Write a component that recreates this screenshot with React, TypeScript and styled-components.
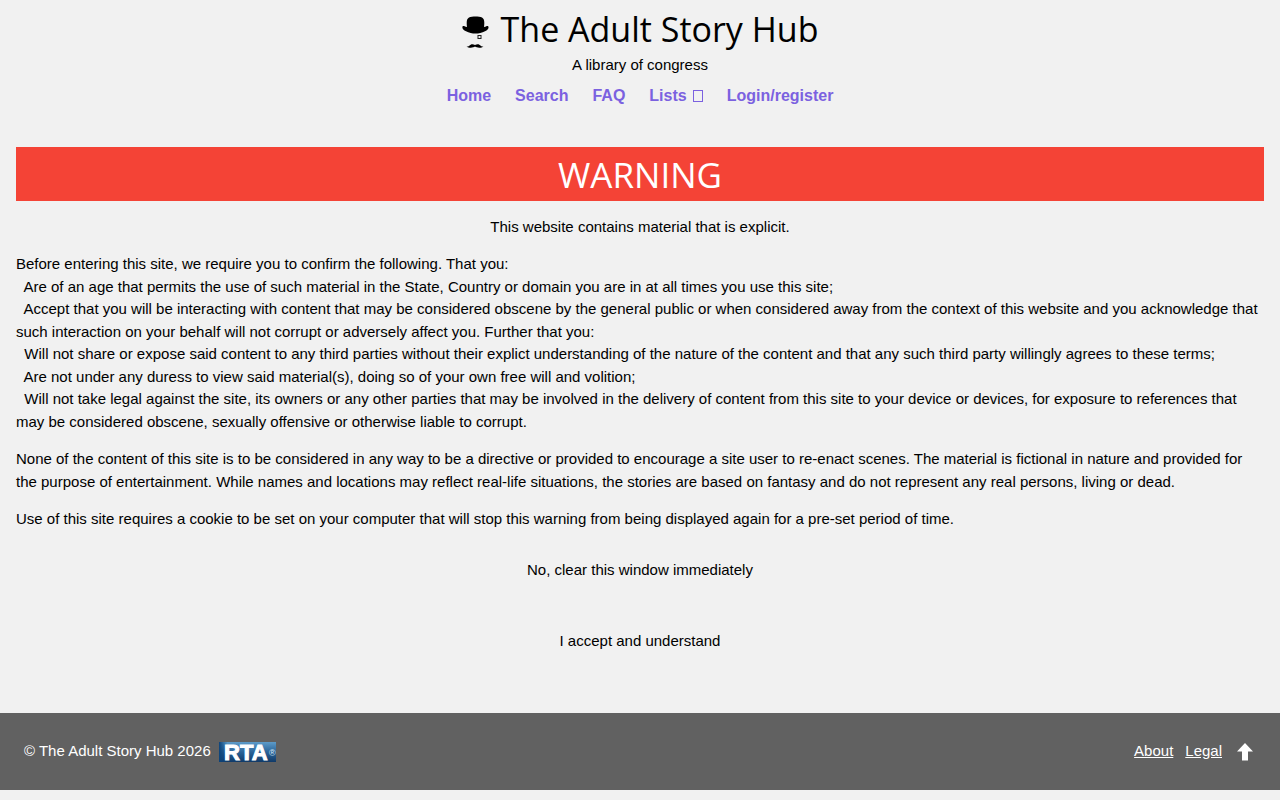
import React from "react";
import styled, { createGlobalStyle } from "styled-components";

const GlobalStyle = createGlobalStyle`
  *, *::before, *::after { box-sizing: border-box; }
  body {
    margin: 0;
    background: #f1f1f1;
    color: #000;
    font-family: "Liberation Sans", Arial, sans-serif;
    font-size: 15px;
    line-height: 1.5;
  }
`;

const Header = styled.header`
  display: flex;
  flex-direction: column;
  align-items: center;
  padding-top: 4px;
`;

const Title = styled.h1`
  display: flex;
  align-items: center;
  gap: 12px;
  margin: 0;
  font-family: "Open Sans", "Noto Sans", sans-serif;
  font-size: 34px;
  font-weight: 400;
  line-height: 50px;
`;

const HatLogo = styled.svg`
  width: 27px;
  height: 34px;
  margin-top: 8px;
`;

const Tagline = styled.p`
  margin: 0;
`;

const Nav = styled.nav`
  display: flex;
  gap: 24px;
  margin-top: 7px;
  font-size: 16px;
  font-weight: 700;
`;

const NavLink = styled.a`
  display: flex;
  align-items: center;
  gap: 6px;
  color: #7b61e0;
  text-decoration: none;
`;

const MenuMark = styled.span`
  width: 10px;
  height: 12px;
  border: 1px solid currentColor;
`;

const Main = styled.main`
  padding: 39px 16px 52px;
`;

const Banner = styled.h2`
  margin: 0;
  padding-top: 2px;
  background: #f44336;
  color: #fff;
  font-family: "Open Sans", "Noto Sans", sans-serif;
  font-size: 35px;
  font-weight: 400;
  line-height: 52px;
  text-align: center;
`;

const Paragraph = styled.p<{ $centered?: boolean }>`
  margin: 15px 0;
  text-align: ${(p) => (p.$centered ? "center" : "left")};
`;

const Actions = styled.div`
  display: flex;
  flex-direction: column;
  align-items: center;
  gap: 33px;
  margin-top: 20px;
`;

const ActionButton = styled.button`
  padding: 8px 16px;
  border: 0;
  background: transparent;
  color: inherit;
  font: inherit;
  cursor: pointer;
`;

const Footer = styled.footer`
  display: flex;
  align-items: center;
  justify-content: space-between;
  min-height: 77px;
  margin-bottom: 10px;
  padding: 0 24px;
  background: #616161;
  color: #fff;
`;

const FooterGroup = styled.div<{ $gap: number }>`
  display: flex;
  align-items: center;
  gap: ${(p) => p.$gap}px;
`;

const FooterLink = styled.a`
  color: inherit;
`;

const TopLink = styled.a`
  display: flex;
  padding: 2px 3px 0;
  color: inherit;
`;

const Badge = styled.svg`
  width: 57px;
  height: 20px;
  margin-top: 2px;
  overflow: visible;
`;

const clauses = [
  "Are of an age that permits the use of such material in the State, Country or domain you are in at all times you use this site;",
  "Accept that you will be interacting with content that may be considered obscene by the general public or when considered away from the context of this website and you acknowledge that such interaction on your behalf will not corrupt or adversely affect you. Further that you:",
  "Will not share or expose said content to any third parties without their explict understanding of the nature of the content and that any such third party willingly agrees to these terms;",
  "Are not under any duress to view said material(s), doing so of your own free will and volition;",
  "Will not take legal against the site, its owners or any other parties that may be involved in the delivery of content from this site to your device or devices, for exposure to references that may be considered obscene, sexually offensive or otherwise liable to corrupt.",
];

function Hat() {
  return (
    <HatLogo viewBox="0 0 27 34" aria-hidden="true">
      <path d="M5 11C4.400 6 4.500 3 7 1.500C10 .3 17 .3 20 1.500C22.500 3 22.600 6 22 11C24 10.600 24.500 9.800 26 10C27.400 12 26 14 23 15.200C17 18.300 10 18.300 4 15.200C1 14 -.4 12 .8 10C2.500 9.800 3 10.600 5 11Z" />
      <rect x="16" y="19.500" width="3" height="3" fill="none" stroke="#222" />
      <path d="M13 29C10.500 27.700 8.500 28.300 7.300 29.800C6.500 30.700 5.500 30.600 4.600 30.200C6 32.200 11 32.200 13 30.600C15 32.200 20 32.200 21.400 30.200C20.500 30.600 19.500 30.700 18.700 29.800C17.500 28.300 15.500 27.700 13 29Z" />
    </HatLogo>
  );
}

function RtaBadge() {
  return (
    <Badge viewBox="0 0 57 20" role="img" aria-label="RTA">
      <defs>
        <linearGradient id="rta-fill" x1="0" y1="0" x2="0" y2="1">
          <stop offset="0" stopColor="#5d9bc9" />
          <stop offset="0.5" stopColor="#2a6499" />
          <stop offset="1" stopColor="#113a68" />
        </linearGradient>
        <linearGradient id="rta-edge" x1="0" y1="0" x2="1" y2="0">
          <stop offset="0" stopColor="#0d4379" />
          <stop offset="0.15" stopColor="#0d4379" stopOpacity="0" />
        </linearGradient>
      </defs>
      <rect width="57" height="20" fill="url(#rta-fill)" />
      <rect width="57" height="20" fill="url(#rta-edge)" />
      <text x="5" y="17.500" fill="#fff" stroke="#fff" fontFamily="Liberation Sans, Arial, sans-serif" fontWeight="700" fontSize="22">
        RTA
      </text>
      <text x="50" y="14" fill="#d8e8f5" fontFamily="Liberation Sans, Arial, sans-serif" fontSize="9">
        ®
      </text>
    </Badge>
  );
}

export default function App() {
  return (
    <>
      <GlobalStyle />
      <Header>
        <Title>
          <Hat />
          The Adult Story Hub
        </Title>
        <Tagline>A library of congress</Tagline>
        <Nav>
          <NavLink href="#home">Home</NavLink>
          <NavLink href="#search">Search</NavLink>
          <NavLink href="#faq">FAQ</NavLink>
          <NavLink href="#lists">
            Lists <MenuMark />
          </NavLink>
          <NavLink href="#login">Login/register</NavLink>
        </Nav>
      </Header>
      <Main>
        <Banner>WARNING</Banner>
        <Paragraph $centered>This website contains material that is explicit.</Paragraph>
        <Paragraph>
          Before entering this site, we require you to confirm the following. That you:
          {clauses.map((clause) => (
            <React.Fragment key={clause}>
              <br />
              {`\u00a0 ${clause}`}
            </React.Fragment>
          ))}
        </Paragraph>
        <Paragraph>
          None of the content of this site is to be considered in any way to be a directive or provided to encourage a
          site user to re-enact scenes. The material is fictional in nature and provided for the purpose of
          entertainment. While names and locations may reflect real-life situations, the stories are based on fantasy
          and do not represent any real persons, living or dead.
        </Paragraph>
        <Paragraph>
          Use of this site requires a cookie to be set on your computer that will stop this warning from being
          displayed again for a pre-set period of time.
        </Paragraph>
        <Actions>
          <ActionButton type="button">No, clear this window immediately</ActionButton>
          <ActionButton type="button">I accept and understand</ActionButton>
        </Actions>
      </Main>
      <Footer>
        <FooterGroup $gap={8}>
          <span>© The Adult Story Hub 2026</span>
          <RtaBadge />
        </FooterGroup>
        <FooterGroup $gap={12}>
          <FooterLink href="#about">About</FooterLink>
          <FooterLink href="#legal">Legal</FooterLink>
          <TopLink href="#top" aria-label="Back to top">
            <svg width="16" height="18" viewBox="0 0 16 18" aria-hidden="true">
              <path d="M8 0L16 8.500H11V17.500H5V8.500H0Z" fill="currentColor" />
            </svg>
          </TopLink>
        </FooterGroup>
      </Footer>
    </>
  );
}
